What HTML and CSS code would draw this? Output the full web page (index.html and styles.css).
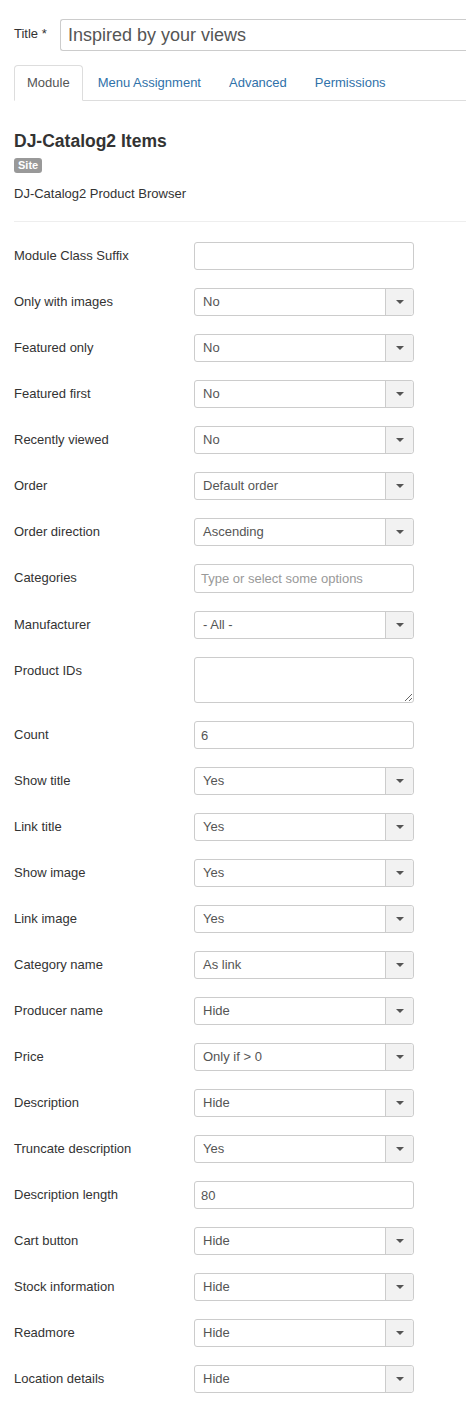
FILE: index.html
```html
<!DOCTYPE html>
<html>
<head>
<meta charset="utf-8">
<link rel="stylesheet" href="styles.css">
</head>
<body>
<div class="page">
  <div class="title-row">
    <label class="title-label">Title *</label>
    <input class="title-input" type="text" value="Inspired by your views">
  </div>

  <ul class="tabs">
    <li class="tab active"><span>Module</span></li>
    <li class="tab"><span>Menu Assignment</span></li>
    <li class="tab"><span>Advanced</span></li>
    <li class="tab"><span>Permissions</span></li>
  </ul>

  <div class="info">
    <h3 class="mod-title">DJ-Catalog2 Items</h3>
    <span class="badge">Site</span>
    <p class="mod-desc">DJ-Catalog2 Product Browser</p>
  </div>
  <hr class="sep">

  <div class="form">
    <div class="row"><div class="lbl">Module Class Suffix</div><div class="ctl"><input class="field" type="text" value=""></div></div>
    <div class="row"><div class="lbl">Only with images</div><div class="ctl"><div class="field select"><span class="val">No</span><span class="btn"><b class="caret"></b></span></div></div></div>
    <div class="row"><div class="lbl">Featured only</div><div class="ctl"><div class="field select"><span class="val">No</span><span class="btn"><b class="caret"></b></span></div></div></div>
    <div class="row"><div class="lbl">Featured first</div><div class="ctl"><div class="field select"><span class="val">No</span><span class="btn"><b class="caret"></b></span></div></div></div>
    <div class="row"><div class="lbl">Recently viewed</div><div class="ctl"><div class="field select"><span class="val">No</span><span class="btn"><b class="caret"></b></span></div></div></div>
    <div class="row"><div class="lbl">Order</div><div class="ctl"><div class="field select"><span class="val">Default order</span><span class="btn"><b class="caret"></b></span></div></div></div>
    <div class="row"><div class="lbl">Order direction</div><div class="ctl"><div class="field select"><span class="val">Ascending</span><span class="btn"><b class="caret"></b></span></div></div></div>
    <div class="row"><div class="lbl">Categories</div><div class="ctl"><div class="field multi"><span class="placeholder">Type or select some options</span></div></div></div>
    <div class="row"><div class="lbl">Manufacturer</div><div class="ctl"><div class="field select"><span class="val">- All -</span><span class="btn"><b class="caret"></b></span></div></div></div>
    <div class="row"><div class="lbl">Product IDs</div><div class="ctl"><textarea class="field area"></textarea></div></div>
    <div class="row"><div class="lbl">Count</div><div class="ctl"><input class="field" type="text" value="6"></div></div>
    <div class="row"><div class="lbl">Show title</div><div class="ctl"><div class="field select"><span class="val">Yes</span><span class="btn"><b class="caret"></b></span></div></div></div>
    <div class="row"><div class="lbl">Link title</div><div class="ctl"><div class="field select"><span class="val">Yes</span><span class="btn"><b class="caret"></b></span></div></div></div>
    <div class="row"><div class="lbl">Show image</div><div class="ctl"><div class="field select"><span class="val">Yes</span><span class="btn"><b class="caret"></b></span></div></div></div>
    <div class="row"><div class="lbl">Link image</div><div class="ctl"><div class="field select"><span class="val">Yes</span><span class="btn"><b class="caret"></b></span></div></div></div>
    <div class="row"><div class="lbl">Category name</div><div class="ctl"><div class="field select"><span class="val">As link</span><span class="btn"><b class="caret"></b></span></div></div></div>
    <div class="row"><div class="lbl">Producer name</div><div class="ctl"><div class="field select"><span class="val">Hide</span><span class="btn"><b class="caret"></b></span></div></div></div>
    <div class="row"><div class="lbl">Price</div><div class="ctl"><div class="field select"><span class="val">Only if &gt; 0</span><span class="btn"><b class="caret"></b></span></div></div></div>
    <div class="row"><div class="lbl">Description</div><div class="ctl"><div class="field select"><span class="val">Hide</span><span class="btn"><b class="caret"></b></span></div></div></div>
    <div class="row"><div class="lbl">Truncate description</div><div class="ctl"><div class="field select"><span class="val">Yes</span><span class="btn"><b class="caret"></b></span></div></div></div>
    <div class="row"><div class="lbl">Description length</div><div class="ctl"><input class="field" type="text" value="80"></div></div>
    <div class="row"><div class="lbl">Cart button</div><div class="ctl"><div class="field select"><span class="val">Hide</span><span class="btn"><b class="caret"></b></span></div></div></div>
    <div class="row"><div class="lbl">Stock information</div><div class="ctl"><div class="field select"><span class="val">Hide</span><span class="btn"><b class="caret"></b></span></div></div></div>
    <div class="row"><div class="lbl">Readmore</div><div class="ctl"><div class="field select"><span class="val">Hide</span><span class="btn"><b class="caret"></b></span></div></div></div>
    <div class="row"><div class="lbl">Location details</div><div class="ctl"><div class="field select"><span class="val">Hide</span><span class="btn"><b class="caret"></b></span></div></div></div>
  </div>
</div>
</body>
</html>
```

FILE: styles.css
```css
html, body {
  margin: 0;
  padding: 0;
  overflow: hidden;
  background: #fff;
}
body {
  font-family: "Liberation Sans", Arial, Helvetica, sans-serif;
  font-size: 13px;
  line-height: 18px;
  color: #333;
}
.page {
  padding: 19px 0 0 14px;
}
.title-row {
  display: flex;
  align-items: center;
}
.title-label {
  width: 46px;
  flex: none;
  padding-bottom: 2px;
}
.title-input {
  flex: 1;
  min-width: 0;
  box-sizing: border-box;
  height: 32px;
  margin: 0;
  padding: 4px 7px;
  border: 1px solid #ccc;
  border-right: 0;
  border-radius: 3px 0 0 3px;
  font-family: inherit;
  font-size: 18px;
  line-height: 22px;
  color: #555;
  outline: none;
}
.tabs {
  list-style: none;
  margin: 14px 0 0 0;
  padding: 0;
  display: flex;
  border-bottom: 1px solid #ddd;
}
.tab {
  margin: 0 2px -1px 0;
  padding: 8px 12px;
  border: 1px solid transparent;
  border-radius: 4px 4px 0 0;
  color: #3071a9;
  line-height: 18px;
}
.tab.active {
  border-color: #ddd;
  border-bottom-color: #fff;
  background: #fff;
  color: #555;
}
.info {
  padding-top: 30px;
}
.mod-title {
  margin: 0;
  font-size: 17.5px;
  line-height: 20px;
  font-weight: bold;
  color: #333;
}
.badge {
  display: inline-block;
  margin-top: 7px;
  padding: 2px 4px;
  border-radius: 3px;
  background: #999;
  color: #fff;
  font-size: 11px;
  font-weight: bold;
  line-height: 11px;
  vertical-align: top;
}
.mod-desc {
  margin: 12px 0 0 0;
}
.sep {
  margin: 18px 0 20px 0;
  border: 0;
  border-top: 1px solid #eee;
  height: 0;
}
.row {
  display: flex;
  margin-bottom: 18px;
}
.row:last-child {
  margin-bottom: 0;
}
.lbl {
  width: 180px;
  flex: none;
  padding-top: 5px;
}
.field {
  display: block;
  box-sizing: border-box;
  width: 220px;
  height: 28px;
  margin: 0;
  border: 1px solid #ccc;
  border-radius: 3px;
  background: #fff;
  font-family: inherit;
  font-size: 13px;
  line-height: 18px;
  color: #555;
  padding: 4px 6px;
  outline: none;
}
.select {
  display: flex;
  padding: 0;
}
.select .val {
  flex: 1;
  padding: 4px 0 0 8px;
  color: #555;
}
.select .btn {
  width: 27px;
  flex: none;
  border-left: 1px solid #ccc;
  background: #f2f2f2;
  border-radius: 0 3px 3px 0;
  display: flex;
  align-items: center;
  justify-content: center;
}
.caret {
  width: 0;
  height: 0;
  border-top: 4px solid #555;
  border-left: 4px solid transparent;
  border-right: 4px solid transparent;
  margin-left: 1px;
}
.multi {
  height: 29px;
  padding: 5px 6px 4px;
}
.placeholder {
  color: #999;
}
.area {
  height: 46px;
  resize: vertical;
}
```
